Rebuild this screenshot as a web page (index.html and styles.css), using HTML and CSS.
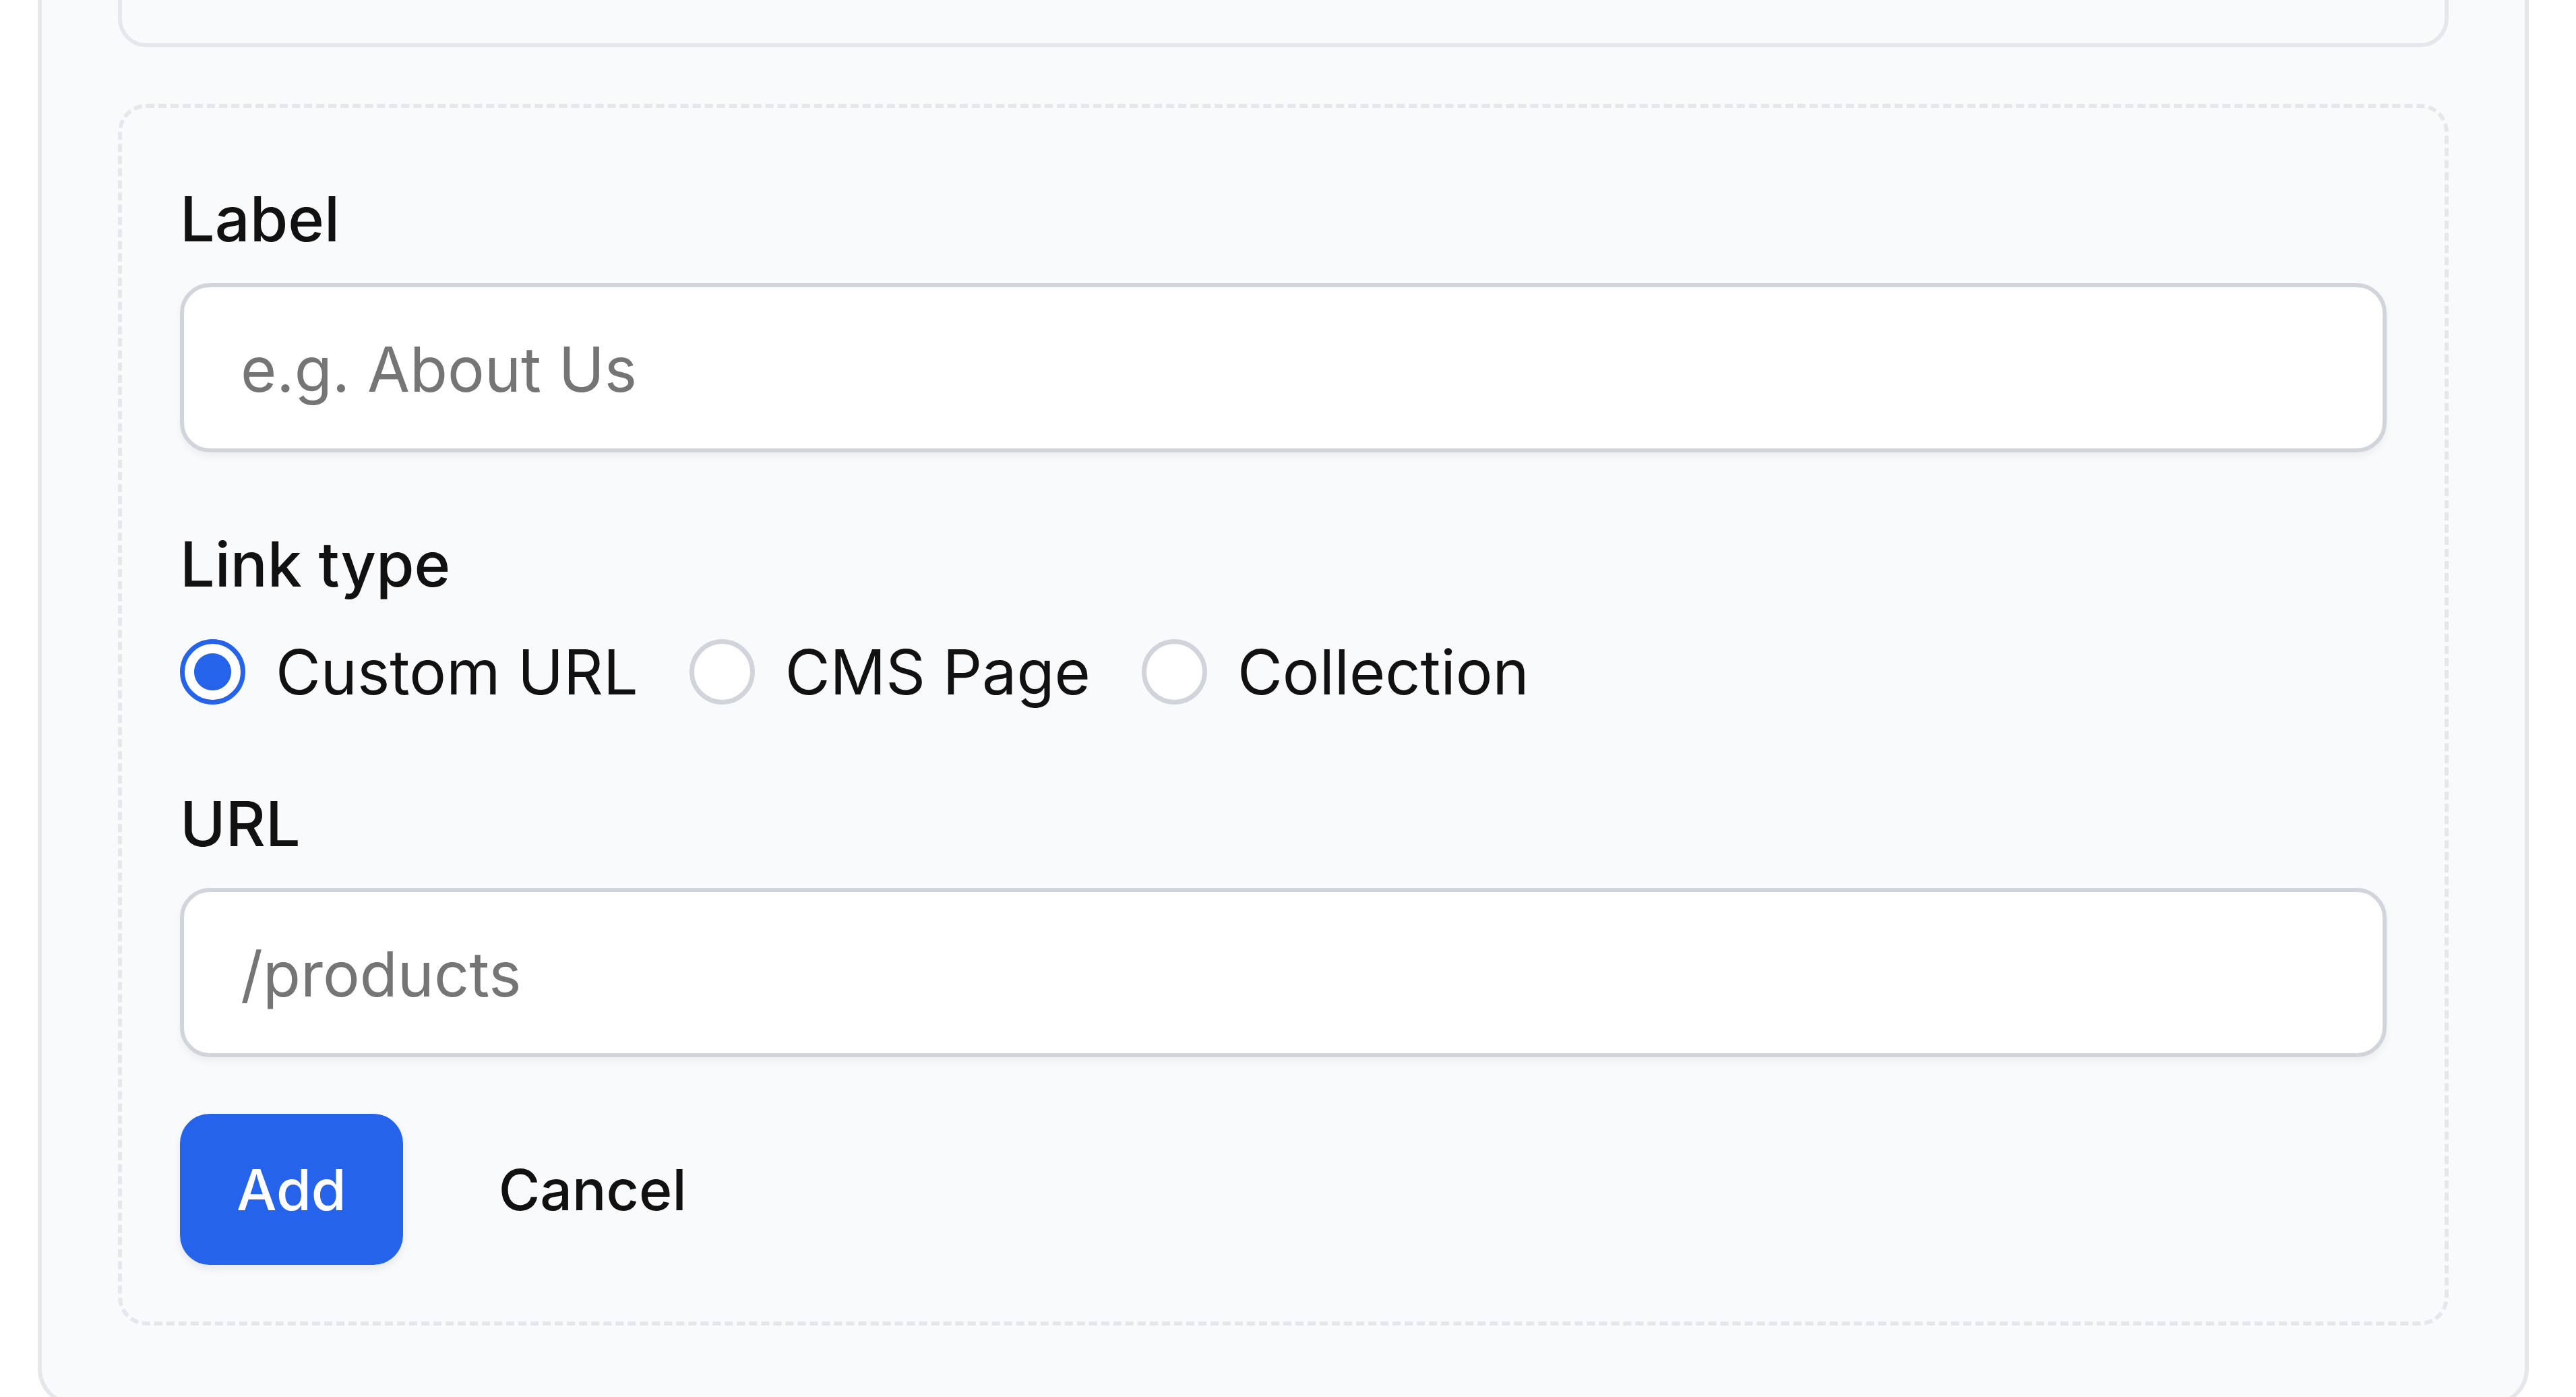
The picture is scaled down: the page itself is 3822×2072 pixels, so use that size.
FILE: index.html
```html
<!doctype html>
<html lang="en">
<head>
	<meta charset="UTF-8">
	<title>Menu items</title>
	<link rel="stylesheet" href="styles.css">
</head>
<body>
	<div class="panel">
	  <div class="panel__list"></div>
	  <form class="new-item">
	    <div class="field">
	      <label class="field__label" for="item-label">Label</label>
	      <input class="field__input" id="item-label" type="text" placeholder="e.g. About Us">
	    </div>
	    <div class="field">
	      <span class="field__label">Link type</span>
	      <div class="field__options">
	        <label class="option"><input class="option__radio" type="radio" name="type" checked>Custom URL</label>
	        <label class="option"><input class="option__radio" type="radio" name="type">CMS Page</label>
	        <label class="option"><input class="option__radio" type="radio" name="type">Collection</label>
	      </div>
	    </div>
	    <div class="field">
	      <label class="field__label" for="item-url">URL</label>
	      <input class="field__input" id="item-url" type="text" placeholder="/products">
	    </div>
	    <div class="new-item__actions">
	      <button class="btn btn--primary" type="button">Add</button>
	      <button class="btn btn--ghost" type="button">Cancel</button>
	    </div>
	  </form>
	</div>
</body>
</html>
```

FILE: styles.css
```css
body {
  background: #fff;
  color: #111;
  font-family: Inter, "Noto Sans", sans-serif;
  margin: 0;
  overflow: hidden;
}

.panel {
  background: #f9fafb;
  border: 6px solid #e5e7eb;
  border-radius: 55px;
  display: flex;
  flex-direction: column;
  gap: 84px;
  margin: -349px 70px 0 56px;
  padding: 113px;
}

.panel__list {
  border: 6px solid #e5e7eb;
  border-radius: 42px;
  height: 300px;
  box-sizing: border-box;
}

.new-item {
  border: 6px dashed #e5e7eb;
  border-radius: 42px;
  display: flex;
  flex-direction: column;
  gap: 98px;
  margin: 0;
  padding: 97px 86px 84px;
}

.field {
  display: flex;
  flex-direction: column;
}

.field__label {
  font-size: 91.5px;
  font-weight: 500;
  line-height: 135px;
  margin-bottom: 28px;
}

.field__input {
  background: #fff;
  border: 6px solid #d1d5db;
  border-radius: 44px;
  box-shadow: 0 6px 12px rgba(0, 0, 0, 0.05);
  box-sizing: border-box;
  color: #111;
  font-family: inherit;
  font-size: 91.5px;
  height: 251px;
  padding: 4px 84px 0;
  width: 100%;
}

.field__input::placeholder {
  color: #757575;
}

.field__options {
  align-items: center;
  display: flex;
  gap: 76px;
  margin-top: 5px;
}

.option {
  align-items: center;
  display: flex;
  font-size: 91.5px;
  gap: 45px;
  line-height: 119px;
}

.option__radio {
  appearance: none;
  background: #fff;
  border: 7px solid #d1d5db;
  border-radius: 50%;
  box-sizing: border-box;
  height: 97px;
  margin: 0;
  width: 97px;
}

.option__radio:checked {
  background: radial-gradient(circle, #2563eb 0 27px, #fff 28px);
  border-color: #2563eb;
}

.new-item__actions {
  align-items: center;
  display: flex;
  gap: 58px;
  margin-top: -14px;
}

.btn {
  background: none;
  border: 0;
  border-radius: 44px;
  color: #111;
  font-family: inherit;
  font-size: 84px;
  font-weight: 500;
  height: 224px;
  padding: 0 84px;
}

.btn--primary {
  background: #2563eb;
  box-shadow: 0 6px 12px rgba(0, 0, 0, 0.08);
  color: #fff;
}
```
